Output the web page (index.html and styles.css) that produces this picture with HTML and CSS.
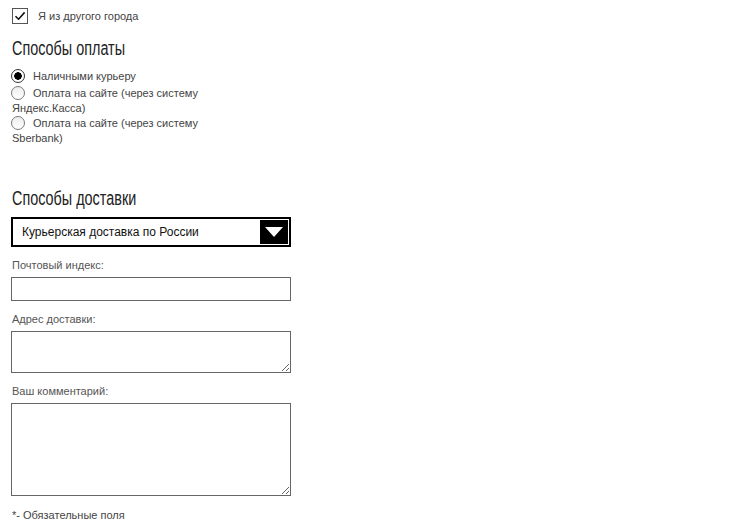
FILE: index.html
```html
<!DOCTYPE html>
<html lang="ru">
<head>
  <meta charset="UTF-8" />
  <title>Оформление заказа</title>
  <link rel="stylesheet" href="styles.css">
</head>
<body>
  <div class="checkout">
    <label class="check-row">
      <span class="checkbox">
        <svg width="14" height="14" viewBox="0 0 14 14"><path d="M2.5 7.2 L5.6 10.2 L11.6 3.4" fill="none" stroke="#111" stroke-width="1.6"/></svg>
      </span>
      Я из другого города
    </label>

    <h2><span>Способы оплаты</span></h2>
    <div class="payment-list">
      <label class="radio-row"><input type="radio" name="pay" checked>Наличными курьеру</label>
      <label class="radio-row"><input type="radio" name="pay">Оплата на сайте (через систему Яндекс.Касса)</label>
      <label class="radio-row"><input type="radio" name="pay">Оплата на сайте (через систему Sberbank)</label>
    </div>

    <h2 class="delivery-title"><span>Способы доставки</span></h2>
    <div class="select-box">
      <span>Курьерская доставка по России</span>
      <span class="select-arrow">
        <svg width="18" height="10" viewBox="0 0 18 10"><path d="M0 0 H18 L9 10 Z" fill="#fff"/></svg>
      </span>
    </div>

    <label class="field-label" for="zip">Почтовый индекс:</label>
    <input class="field" id="zip" type="text">

    <label class="field-label" for="address">Адрес доставки:</label>
    <textarea class="field area-small" id="address"></textarea>

    <label class="field-label" for="comment">Ваш комментарий:</label>
    <textarea class="field area-big" id="comment"></textarea>

    <p class="note">*- Обязательные поля</p>
  </div>
</body>
</html>
```

FILE: styles.css
```css
body {
  margin: 0;
  background: #fff;
  font-family: 'Liberation Sans', Arial, sans-serif;
  font-size: 11px;
  color: #444;
}

.checkout {
  padding: 8px 11px 0;
  width: 280px;
}

.check-row {
  display: flex;
  align-items: center;
  gap: 10px;
  height: 16px;
  margin-left: 1px;
}

.checkbox {
  width: 16px;
  height: 16px;
  box-sizing: border-box;
  border: 1px solid #555;
  display: flex;
  align-items: center;
  justify-content: center;
}

/* the headings use a narrow face: squeeze a regular one */
h2 {
  font-weight: normal;
  font-size: 20px;
  line-height: 24px;
  color: #222;
  margin: 12px 0 9px 1px;
}

h2 span {
  display: inline-block;
  transform: scaleX(0.72);
  transform-origin: left center;
  white-space: nowrap;
}

.payment-list {
  width: 205px;
  margin-left: 1px;
}

.radio-row {
  display: block;
  line-height: 15px;
}

.radio-row:first-child {
  margin-bottom: 2px;
}

.radio-row input {
  appearance: none;
  width: 14px;
  height: 14px;
  box-sizing: border-box;
  margin: 0 8px 0 -1px;
  vertical-align: -3px;
  border: 1px solid #7a7a7a;
  border-radius: 50%;
  background: linear-gradient(#ededed, #fff);
}

.radio-row input:checked {
  border-color: #333;
  background: radial-gradient(circle, #000 0 3.5px, #fff 4px);
}

.delivery-title {
  margin-top: 40px;
  margin-bottom: 7px;
}

.select-box {
  display: flex;
  align-items: center;
  justify-content: space-between;
  height: 30px;
  box-sizing: border-box;
  border: 2px solid #000;
  padding: 1px 1px 1px 9px;
  font-size: 12px;
  color: #111;
}

.select-arrow {
  width: 28px;
  height: 24px;
  background: #000;
  display: flex;
  align-items: center;
  justify-content: center;
}

.field-label {
  display: block;
  line-height: 15px;
  margin: 11px 0 4px 1px;
  color: #555;
}

.field {
  display: block;
  width: 280px;
  box-sizing: border-box;
  border: 1px solid #666;
  margin: 0;
  padding: 2px;
  font-family: inherit;
}

input.field {
  height: 24px;
}

.area-small {
  height: 42px;
}

.area-big {
  height: 93px;
}

.note {
  margin: 12px 0 0 1px;
  line-height: 15px;
}
```
